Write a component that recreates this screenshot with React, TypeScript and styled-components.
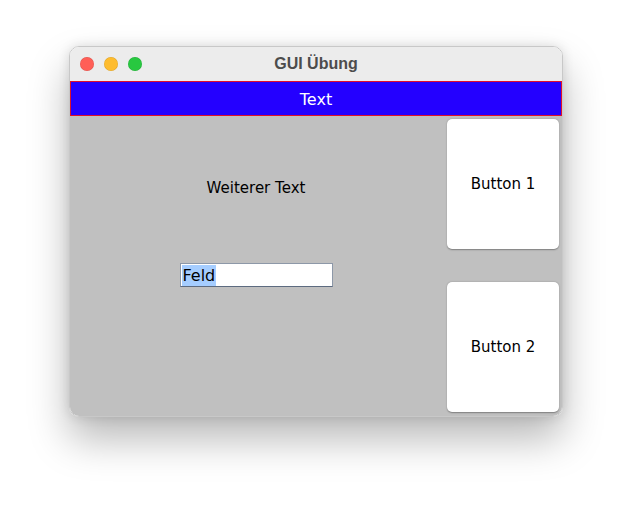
import React from 'react'
import styled, { createGlobalStyle } from 'styled-components'

const GlobalStyle = createGlobalStyle`
  html, body {
    margin: 0;
    padding: 0;
    background: #ffffff;
  }
  body {
    font-family: "DejaVu Sans", "Liberation Sans", sans-serif;
  }
`

const Page = styled.div`
  width: 632px;
  height: 508px;
  padding: 46px 0 0 69px;
  box-sizing: border-box;
`

const Window = styled.div`
  width: 494px;
  height: 371px;
  display: flex;
  flex-direction: column;
  border-radius: 10px;
  overflow: hidden;
  border: 1px solid #c8c8c8;
  box-sizing: border-box;
  box-shadow: 0 22px 40px rgba(0, 0, 0, 0.28), 0 0 12px rgba(0, 0, 0, 0.12);
`

const TitleBar = styled.div`
  height: 34px;
  flex-shrink: 0;
  background: #ececec;
  display: grid;
  grid-template-columns: 1fr auto 1fr;
  align-items: center;
  padding: 0 10px;
`

const Lights = styled.div`
  display: flex;
  gap: 10px;
`

const Light = styled.span<{ color: string }>`
  width: 14px;
  height: 14px;
  border-radius: 50%;
  background: ${({ color }) => color};
  box-shadow: inset 0 0 0 0.5px rgba(0, 0, 0, 0.12);
`

const Title = styled.div`
  font-family: "Liberation Sans", Arial, sans-serif;
  font-weight: bold;
  font-size: 16px;
  color: #4c4c4c;
`

const Banner = styled.div`
  height: 35px;
  flex-shrink: 0;
  background: #2400ff;
  border: 1px solid #e0102a;
  box-sizing: border-box;
  display: flex;
  align-items: center;
  justify-content: center;
  padding-top: 2px;
  color: #ffffff;
  font-size: 16px;
`

const Content = styled.div`
  flex: 1;
  background: #c0c0c0;
  display: flex;
`

const CenterPanel = styled.div`
  flex: 1;
  display: flex;
  flex-direction: column;
  align-items: center;
  padding-top: 63px;
`

const Label = styled.div`
  font-size: 15px;
  color: #000000;
`

const Field = styled.div`
  margin-top: 66px;
  width: 153px;
  height: 24px;
  box-sizing: border-box;
  background: #ffffff;
  border: 1px solid #8d98a8;
  border-bottom-color: #5d6b80;
  display: flex;
  align-items: center;
  padding-left: 1px;
`

const Selected = styled.span`
  background: #a5cdff;
  color: #000000;
  font-size: 16px;
  line-height: 21px;
  padding: 0 1px;
`

const SidePanel = styled.div`
  width: 120px;
  box-sizing: border-box;
  display: flex;
  flex-direction: column;
  justify-content: space-between;
  padding: 3px 3px 4px 5px;
`

const Button = styled.button`
  height: 130px;
  background: #ffffff;
  border: none;
  border-radius: 5px;
  box-shadow: 0 0.5px 1.5px rgba(0, 0, 0, 0.35);
  font-family: "DejaVu Sans", "Liberation Sans", sans-serif;
  font-size: 15px;
  color: #000000;
  padding: 0;
`

export default function App() {
  return (
    <Page>
      <GlobalStyle />
      <Window>
        <TitleBar>
          <Lights>
            <Light color="#ff5f57" />
            <Light color="#febc2e" />
            <Light color="#28c840" />
          </Lights>
          <Title>GUI Übung</Title>
          <div />
        </TitleBar>
        <Banner>Text</Banner>
        <Content>
          <CenterPanel>
            <Label>Weiterer Text</Label>
            <Field>
              <Selected>Feld</Selected>
            </Field>
          </CenterPanel>
          <SidePanel>
            <Button>Button 1</Button>
            <Button>Button 2</Button>
          </SidePanel>
        </Content>
      </Window>
    </Page>
  )
}
